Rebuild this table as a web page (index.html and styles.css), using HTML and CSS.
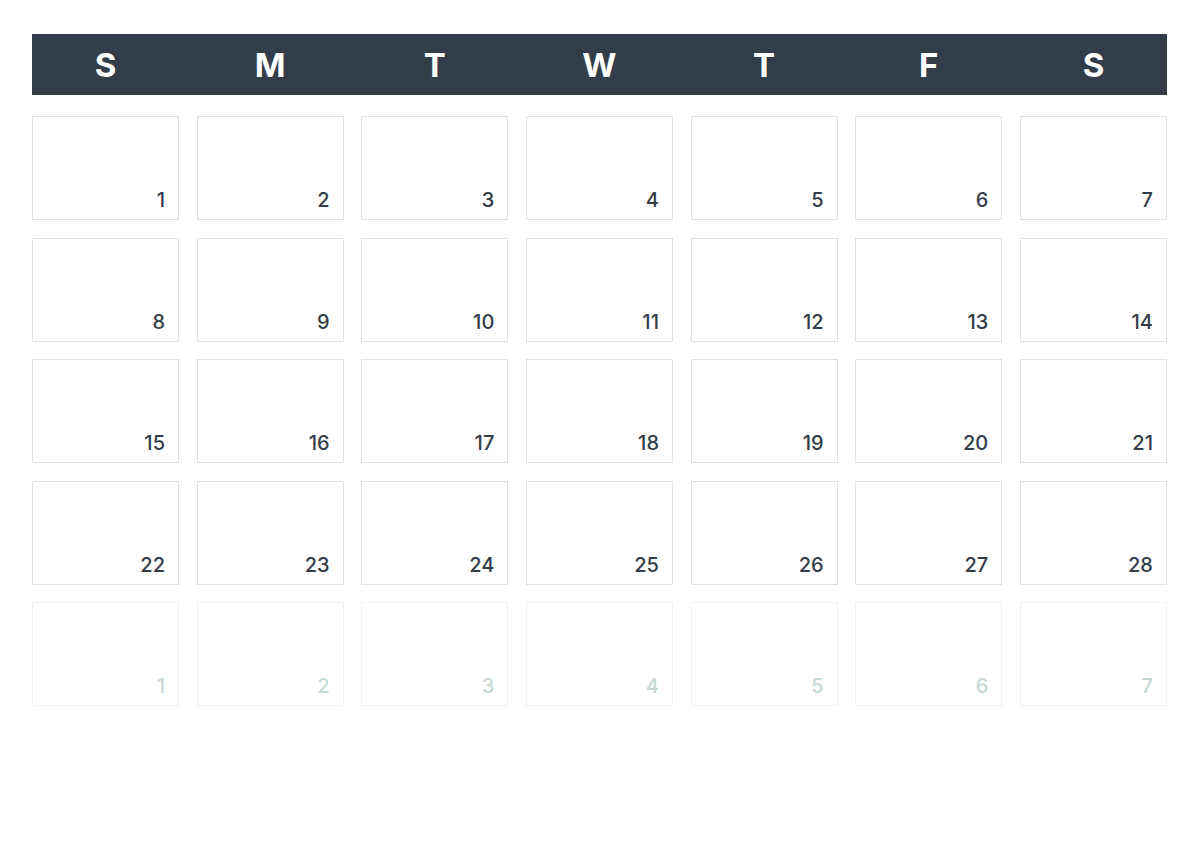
FILE: index.html
```html
<!DOCTYPE html>
<html lang="en">
<head>
    <meta charset="UTF-8">
    <meta name="viewport" content="width=device-width, initial-scale=1.0">
    <title>Calendar</title>
    <link rel="stylesheet" href="styles.css">
</head>
<body>
    <div class="calendar">
        <div class="weekdays">
            <span>S</span><span>M</span><span>T</span><span>W</span><span>T</span><span>F</span><span>S</span>
        </div>
        <div class="days">
            <div class="day"><span>1</span></div>
            <div class="day"><span>2</span></div>
            <div class="day"><span>3</span></div>
            <div class="day"><span>4</span></div>
            <div class="day"><span>5</span></div>
            <div class="day"><span>6</span></div>
            <div class="day"><span>7</span></div>
            <div class="day"><span>8</span></div>
            <div class="day"><span>9</span></div>
            <div class="day"><span>10</span></div>
            <div class="day"><span>11</span></div>
            <div class="day"><span>12</span></div>
            <div class="day"><span>13</span></div>
            <div class="day"><span>14</span></div>
            <div class="day"><span>15</span></div>
            <div class="day"><span>16</span></div>
            <div class="day"><span>17</span></div>
            <div class="day"><span>18</span></div>
            <div class="day"><span>19</span></div>
            <div class="day"><span>20</span></div>
            <div class="day"><span>21</span></div>
            <div class="day"><span>22</span></div>
            <div class="day"><span>23</span></div>
            <div class="day"><span>24</span></div>
            <div class="day"><span>25</span></div>
            <div class="day"><span>26</span></div>
            <div class="day"><span>27</span></div>
            <div class="day"><span>28</span></div>
            <div class="day other"><span>1</span></div>
            <div class="day other"><span>2</span></div>
            <div class="day other"><span>3</span></div>
            <div class="day other"><span>4</span></div>
            <div class="day other"><span>5</span></div>
            <div class="day other"><span>6</span></div>
            <div class="day other"><span>7</span></div>
        </div>
    </div>
</body>
</html>
```

FILE: styles.css
```css
body { margin: 0; background: #fff; font-family: Inter, "Open Sans", "Liberation Sans", sans-serif; }
.calendar { margin: 34px 0 0 32px; width: 1135px; }
.weekdays { display: grid; grid-template-columns: repeat(7, 147px); column-gap: 17.67px; height: 61px; background: #333d4a; align-items: center; }
.weekdays span { text-align: center; color: #fff; font-size: 33px; font-weight: 700; line-height: 1; padding-top: 2px; }
.days { display: grid; grid-template-columns: repeat(7, 147px); column-gap: 17.67px; row-gap: 17.5px; margin-top: 21px; }
.day { height: 104px; box-sizing: border-box; border: 1px solid #dbe4e2; display: flex; align-items: flex-end; justify-content: flex-end; padding: 0 13px 9px 0; }
.day span { color: #333d4a; font-size: 20px; font-weight: 500; line-height: 1; }
.day.other { border-color: #eef2f1; }
.day.other span { color: #c5d8d2; }
```
